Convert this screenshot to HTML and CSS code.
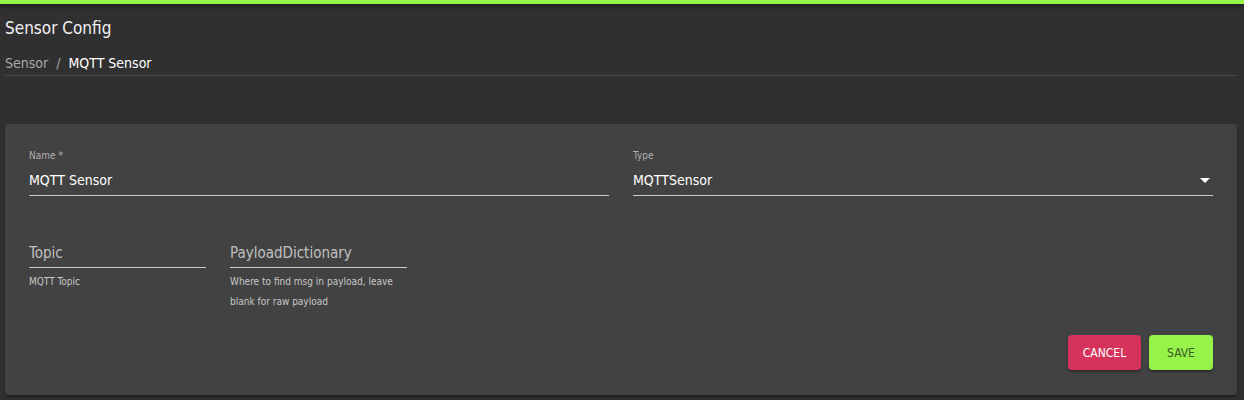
FILE: index.html
```html
<!DOCTYPE html>
<html>
<head>
<meta charset="utf-8">
<link rel="stylesheet" href="styles.css">
</head>
<body>
<div class="topbar"></div>
<header class="header">
  <h1 class="title">Sensor Config</h1>
  <nav class="crumbs"><span class="crumb-muted">Sensor</span><span class="sep">/</span><span class="crumb-current">MQTT Sensor</span></nav>
</header>
<main class="card">
  <div class="row row-main">
    <div class="field">
      <div class="label">Name *</div>
      <div class="value">MQTT Sensor</div>
    </div>
    <div class="field">
      <div class="label">Type</div>
      <div class="value select"><span>MQTTSensor</span>
        <svg class="caret" width="10" height="5" viewBox="0 0 10 5"><path d="M0 0 L10 0 L5 5 Z" fill="#ffffff"/></svg>
      </div>
    </div>
  </div>
  <div class="row row-extra">
    <div class="small-field">
      <div class="placeholder">Topic</div>
      <div class="hint">MQTT Topic</div>
    </div>
    <div class="small-field">
      <div class="placeholder">PayloadDictionary</div>
      <div class="hint">Where to find msg in payload, leave blank for raw payload</div>
    </div>
  </div>
  <div class="actions">
    <button class="btn btn-cancel">CANCEL</button>
    <button class="btn btn-save">SAVE</button>
  </div>
</main>
</body>
</html>
```

FILE: styles.css
```css
html, body {
  margin: 0;
  padding: 0;
}
body {
  background: #303030;
  font-family: "DejaVu Sans Condensed", "Liberation Sans", sans-serif;
  color: #ffffff;
  height: 400px;
  overflow: hidden;
}
.topbar {
  height: 4px;
  background: #96f34a;
  box-shadow: 0 2px 4px rgba(0,0,0,0.5);
}
.header {
  margin: 0 7px 0 5px;
  border-bottom: 1px solid #4b4b4b;
}
.title {
  margin: 0;
  padding-top: 13px;
  height: 37px;
  line-height: 22px;
  font-size: 17px;
  font-weight: normal;
  color: #f2f2f2;
}
.crumbs {
  height: 20px;
  padding-top: 1px;
  line-height: 16px;
  font-size: 14px;
}
.crumb-muted { color: #a9a9a9; }
.sep { color: #a9a9a9; margin: 0 8px; }
.crumb-current { color: #ffffff; }

.card {
  margin: 48px 7px 0 5px;
  background: #424242;
  border-radius: 4px;
  box-shadow: 0 2px 3px rgba(0,0,0,0.35);
  padding: 24px 24px 25px 24px;
  height: 222px;
  display: flex;
  flex-direction: column;
}
.row-main {
  display: flex;
  gap: 24px;
}
.field {
  flex: 1;
  border-bottom: 1px solid #c8c8c8;
}
.label {
  font-size: 10px;
  line-height: 14px;
  color: #b0b0b0;
  margin-top: 1px;
}
.value {
  font-size: 14px;
  line-height: 20px;
  margin-top: 7px;
  padding-bottom: 5px;
  color: #ffffff;
}
.select {
  display: flex;
  align-items: center;
  justify-content: space-between;
}
.caret {
  margin-right: 3px;
}
.row-extra {
  display: flex;
  gap: 24px;
  margin-top: 47px;
}
.small-field {
  width: 177px;
}
.placeholder {
  font-size: 15px;
  line-height: 20px;
  color: #c0c0c0;
  padding-bottom: 4px;
  border-bottom: 1px solid #c8c8c8;
}
.hint {
  font-size: 10px;
  line-height: 20px;
  color: #c8c8c8;
  margin-top: 4px;
}
.actions {
  margin-top: auto;
  display: flex;
  justify-content: flex-end;
  gap: 8px;
}
.btn {
  height: 35px;
  border: none;
  border-radius: 4px;
  font-family: inherit;
  font-size: 12px;
  padding: 0;
  box-shadow: 0 2px 2px rgba(0,0,0,0.35);
}
.btn-cancel {
  background: #d5335c;
  color: #ffffff;
  width: 73px;
}
.btn-save {
  background: #96f34a;
  color: #3e5a2a;
  width: 64px;
}
```
